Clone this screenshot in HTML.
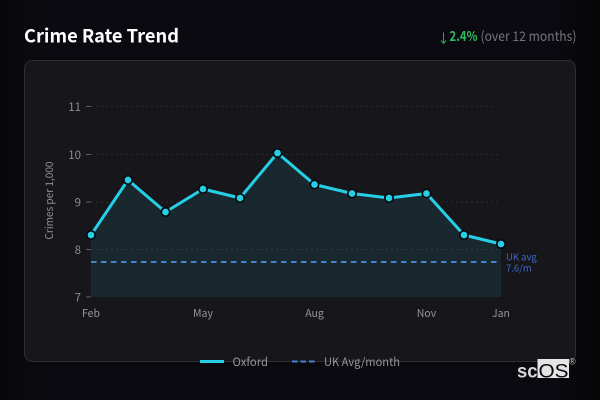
<!DOCTYPE html>
<html><head><meta charset="utf-8"><style>
html,body{margin:0;padding:0;width:600px;height:400px;overflow:hidden;background:#0a0a0f}
svg{display:block}
text{font-family:"Noto Sans CJK JP","Liberation Sans",sans-serif}
text.l{font-family:"Liberation Sans",sans-serif}
</style></head><body>
<svg width="600" height="400" viewBox="0 0 600 400" xmlns="http://www.w3.org/2000/svg">
<defs><linearGradient id="bg" x1="0" x2="1" y1="0" y2="0"><stop offset="0" stop-color="#08080c"/><stop offset=".08" stop-color="#0a0a10"/><stop offset=".92" stop-color="#0a0a10"/><stop offset="1" stop-color="#060609"/></linearGradient></defs>
<rect width="600" height="400" fill="url(#bg)"/>
<text x="24" y="42.500" font-size="18.500" font-weight="700" fill="#fff" textLength="155" lengthAdjust="spacingAndGlyphs">Crime Rate Trend</text>
<path d="M443.500 32.500V43M441 40.500L443.500 43.500L446 40.500" fill="none" stroke="#22a850" stroke-width="1"/>
<text x="449.500" y="41" font-size="13.500" font-weight="700" fill="#2fbf62" textLength="28" lengthAdjust="spacingAndGlyphs">2.4%</text>
<text x="480.500" y="41" font-size="13.500" fill="#75757b" textLength="96" lengthAdjust="spacingAndGlyphs">(over 12 months)</text>
<rect x="24.500" y="60.500" width="551" height="301" rx="8" fill="#17171b" stroke="#2e2e33"/>
<g stroke="#2b2b30" stroke-dasharray="2 3">
<path d="M91 106.500H497M91 154.500H501M91 202H501M91 249.500H501"/></g>
<g stroke="#5f5f64" stroke-width="1"><path d="M86 106.500H91M86 154.500H91M86 202H91M86 249.500H91M86 297H91"/></g>
<g font-size="11.500" fill="#8d8d92" text-anchor="end">
<text x="81" y="111">11</text><text x="81" y="159">10</text><text x="81" y="206.500">9</text><text x="81" y="254">8</text><text x="81" y="301.500">7</text></g>
<text transform="translate(53,200.500) rotate(-90)" font-size="10.500" fill="#8d8d92" text-anchor="middle" textLength="78" lengthAdjust="spacingAndGlyphs">Crimes per 1,000</text>
<path d="M91 235L128 180L165.500 212L203 189L240 198L277.500 153L314.500 184.500L352 193.500L389 198L426.500 193.500L464 235L501 244V297H91Z" fill="#19282f"/>
<path d="M91 249.500H501" stroke="#2c3a40" stroke-dasharray="2 3"/>
<path d="M91 262H497" stroke="#3f84cc" stroke-width="2" stroke-dasharray="5.500 4.500"/>
<path d="M91 235L128 180L165.500 212L203 189L240 198L277.500 153L314.500 184.500L352 193.500L389 198L426.500 193.500L464 235L501 244" fill="none" stroke="#25cfe6" stroke-width="3" stroke-linejoin="round"/>
<g fill="#25cfe6" stroke="#07090c" stroke-width="1.700">
<circle cx="91" cy="235" r="4.200"/><circle cx="128" cy="180" r="4.200"/><circle cx="165.500" cy="212" r="4.200"/><circle cx="203" cy="189" r="4.200"/><circle cx="240" cy="198" r="4.200"/><circle cx="277.500" cy="153" r="4.200"/><circle cx="314.500" cy="184.500" r="4.200"/><circle cx="352" cy="193.500" r="4.200"/><circle cx="389" cy="198" r="4.200"/><circle cx="426.500" cy="193.500" r="4.200"/><circle cx="464" cy="235" r="4.200"/><circle cx="501" cy="244" r="4.200"/></g>
<g font-size="9.500" fill="#3f68c8"><text x="506" y="260.500">UK avg</text><text x="506" y="271.500">7.6/m</text></g>
<g font-size="10.500" fill="#95959a" text-anchor="middle"><text x="91" y="317">Feb</text><text x="203" y="317">May</text><text x="314.500" y="317">Aug</text><text x="426.500" y="317">Nov</text><text x="501" y="317">Jan</text></g>
<path d="M200 361.500H224" stroke="#25cfe6" stroke-width="3"/>
<path d="M292 361.500H316" stroke="#4a82d0" stroke-width="2" stroke-dasharray="5.500 3"/>
<g font-size="11.500" fill="#95959a"><text x="232.500" y="366" textLength="35.500" lengthAdjust="spacingAndGlyphs">Oxford</text><text x="324" y="366" textLength="76" lengthAdjust="spacingAndGlyphs">UK Avg/month</text></g>
<rect x="537.500" y="359" width="31.500" height="19" fill="#e4e4e4"/>
<text class="l" x="517" y="377.500" font-size="19" font-weight="700" fill="#d8d8d8" textLength="20.500" lengthAdjust="spacingAndGlyphs">sc</text>
<text class="l" x="538.500" y="377.500" font-size="19" fill="#0a0a10" textLength="30" lengthAdjust="spacingAndGlyphs">OS</text>
<text class="l" x="569" y="364.500" font-size="9" fill="#c4c4c4">®</text>
</svg>
</body></html>
